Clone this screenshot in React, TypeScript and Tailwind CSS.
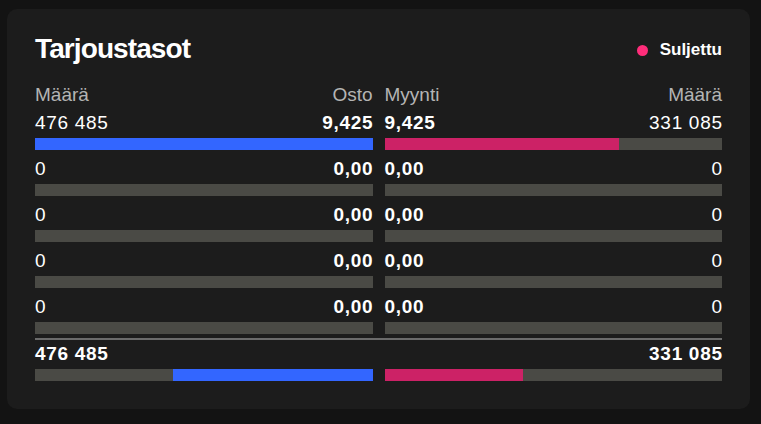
import React from 'react';

type Level = { qty: number; price: string };

const bids: Level[] = [
  { qty: 476485, price: '9,425' },
  { qty: 0, price: '0,00' },
  { qty: 0, price: '0,00' },
  { qty: 0, price: '0,00' },
  { qty: 0, price: '0,00' },
];

const asks: Level[] = [
  { qty: 331085, price: '9,425' },
  { qty: 0, price: '0,00' },
  { qty: 0, price: '0,00' },
  { qty: 0, price: '0,00' },
  { qty: 0, price: '0,00' },
];

const fmt = (n: number) => n.toLocaleString('fi-FI').replace(/\s/g, ' ');

const maxQty = Math.max(...bids.map((b) => b.qty), ...asks.map((a) => a.qty));
const bidTotal = bids.reduce((s, b) => s + b.qty, 0);
const askTotal = asks.reduce((s, a) => s + a.qty, 0);

const Bar = ({ pct, side }: { pct: number; side: 'buy' | 'sell' }) => (
  <div className={`mt-[3px] flex h-3 bg-[#4a4a45] ${side === 'buy' ? 'justify-end' : 'justify-start'}`}>
    <div
      className={side === 'buy' ? 'h-full bg-[#3366ff]' : 'h-full bg-[#cc2266]'}
      style={{ width: `${pct}%` }}
    />
  </div>
);

const Side = ({ levels, side }: { levels: Level[]; side: 'buy' | 'sell' }) => (
  <div className="flex flex-col">
    <div className="mb-1 flex justify-between leading-6 text-[#b4b4b4]">
      <span>{side === 'buy' ? 'Määrä' : 'Myynti'}</span>
      <span>{side === 'buy' ? 'Osto' : 'Määrä'}</span>
    </div>
    {levels.map((l, i) => (
      <div key={i} className={i === 0 ? '' : 'mt-[7px]'}>
        <div
          className={`-mr-[0.7px] flex justify-between leading-6 tracking-[0.7px] ${side === 'sell' ? 'flex-row-reverse' : ''}`}
        >
          <span>{fmt(l.qty)}</span>
          <span className="font-bold">{l.price}</span>
        </div>
        <Bar pct={(l.qty / maxQty) * 100} side={side} />
      </div>
    ))}
  </div>
);

export default function App() {
  return (
    <div className="min-h-screen bg-[#131313] pl-[7px] pt-[9px] font-['Liberation_Sans',Arial,sans-serif] text-[19px] text-white">
      <div className="w-[743px] rounded-[10px] bg-[#1c1c1c] px-7 pb-7 pt-[22px]">
        <div className="flex items-center justify-between">
          <h2 className="text-[28px] font-bold leading-9 tracking-[-0.9px]">Tarjoustasot</h2>
          <div className="flex items-center gap-3 pt-0.5">
            <span className="h-[11px] w-[11px] rounded-full bg-[#ff2d7a]" />
            <span className="text-[17px] font-bold">Suljettu</span>
          </div>
        </div>

        <div className="mt-4 grid grid-cols-2 gap-x-3">
          <Side levels={bids} side="buy" />
          <Side levels={asks} side="sell" />
        </div>

        <div className="mt-1 h-[1.5px] bg-[#6b6b6b]" />

        {/* totals */}
        <div className="mt-[2px] grid grid-cols-2 gap-x-3 tracking-[0.7px]">
          <div>
            <div className="font-bold leading-6">{fmt(bidTotal)}</div>
            <Bar pct={(bidTotal / (bidTotal + askTotal)) * 100} side="buy" />
          </div>
          <div>
            <div className="-mr-[0.7px] text-right font-bold leading-6">{fmt(askTotal)}</div>
            <Bar pct={(askTotal / (bidTotal + askTotal)) * 100} side="sell" />
          </div>
        </div>
      </div>
    </div>
  );
}
